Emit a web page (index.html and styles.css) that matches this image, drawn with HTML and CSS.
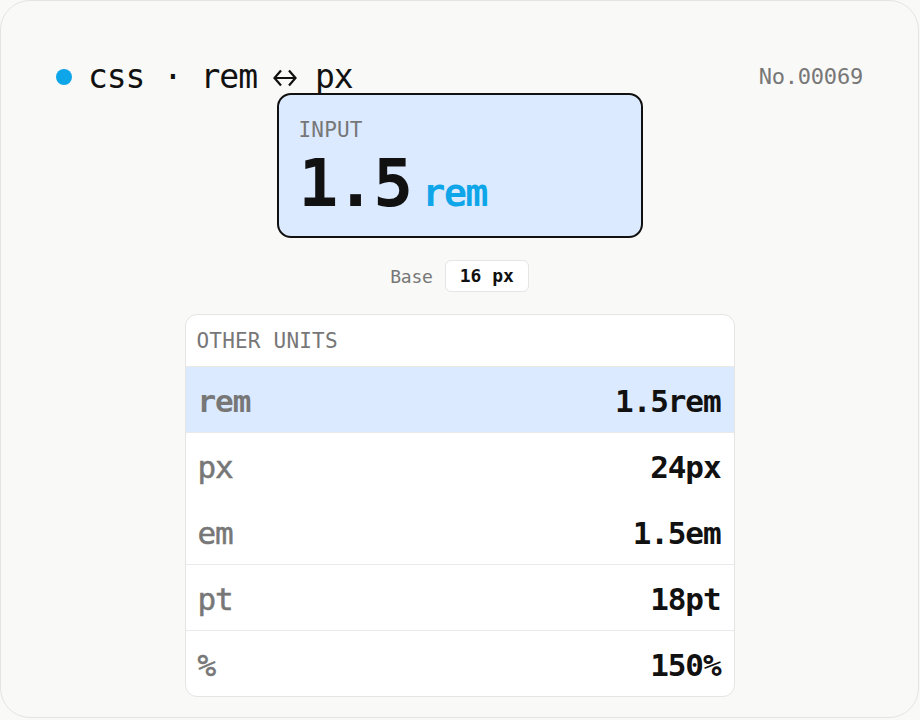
FILE: index.html
```html
<!DOCTYPE html>
<html>
<head lang="en">
<meta charset="UTF-8">
<title>rem ↔ px</title>
<link rel="stylesheet" href="styles.css">
</head>
<body>
<div class="card">
    <div class="top">
        <div class="title">
            <span class="dot"></span>
            <span>css · rem</span>
            <svg class="arrow" width="24" height="18" viewBox="0 0 24 18"><path d="M8 1.5 L1.5 9 L8 16.5 M16 1.5 L22.5 9 L16 16.5 M1.5 9 H22.5" fill="none" stroke="#111" stroke-width="2.2"/></svg>
            <span>px</span>
        </div>
        <div class="no">No.00069</div>
    </div>

    <div class="input">
        <div class="label">INPUT</div>
        <div class="value"><span class="num">1.5</span><span class="unit">rem</span></div>
    </div>

    <div class="base">
        <span class="base-label">Base</span>
        <span class="base-pill">16 px</span>
    </div>

    <div class="units">
        <div class="units-head">OTHER UNITS</div>
        <ul>
            <li class="on"><span>rem</span><b>1.5rem</b></li>
            <li><span>px</span><b>24px</b></li>
            <li class="flat"><span>em</span><b>1.5em</b></li>
            <li><span>pt</span><b>18pt</b></li>
            <li><span>%</span><b>150%</b></li>
        </ul>
    </div>
</div>
</body>
</html>
```

FILE: styles.css
```css
*{margin:0;padding:0;box-sizing:border-box;}
html,body{
	width:100%;
	height:100%;
	background:#f9f9f7;
}
body{
	font-family:"DejaVu Sans Mono","Liberation Mono",monospace;
	color:#111;
}
.card{
	width:919px;
	height:718px;
	border:1px solid #e4e4e4;
	border-radius:30px;
	background:#f9f9f7;
	padding:60px 55px 0 55px;
}

/* header line */
.top{
	display:flex;
	justify-content:space-between;
	align-items:center;
	height:31px;
	margin-bottom:1px;
}
.title{
	display:flex;
	align-items:center;
	font-size:33px;
	line-height:31px;
	letter-spacing:-1.1px;
	white-space:nowrap;
}
.dot{
	width:16px;
	height:16px;
	border-radius:50%;
	background:#0ea5e9;
	margin-right:16px;
}
.arrow{
	margin:2px 18px 0 16px;
}
.no{
	font-size:22px;
	line-height:31px;
	letter-spacing:-0.2px;
	color:#777;
}

/* input box */
.input{
	width:366px;
	margin:0 auto;
	border:2px solid #111;
	border-radius:14px;
	background:#dbeafe;
	padding:23px 20px 19px 20px;
}
.label,.units-head{
	font-size:21px;
	line-height:24px;
	letter-spacing:0.2px;
	color:#777;
}
.value{
	display:flex;
	align-items:baseline;
	margin-top:9px;
	height:66px;
}
.num{
	font-size:66px;
	line-height:66px;
	letter-spacing:-2.4px;
	font-weight:bold;
}
.unit{
	font-size:38px;
	letter-spacing:-1.4px;
	font-weight:bold;
	color:#0ea5e9;
	margin-left:12px;
}

/* base size */
.base{
	display:flex;
	justify-content:center;
	align-items:center;
	gap:12px;
	margin-top:22px;
	font-size:18px;
}
.base-label{
	color:#777;
	letter-spacing:-0.2px;
}
.base-pill{
	height:32px;
	line-height:30px;
	padding:0 14px;
	background:#fff;
	border:1px solid #e5e5e5;
	border-radius:6px;
	font-weight:bold;
}

/* conversion table */
.units{
	width:550px;
	margin:22px auto 0;
	background:#fff;
	border:1px solid #e7e5e4;
	border-radius:12px;
	overflow:hidden;
}
.units-head{
	display:flex;
	align-items:center;
	height:52px;
	padding-left:11px;
	border-bottom:1px solid #ebe8e2;
}
ul{list-style:none;}
li{
	display:flex;
	justify-content:space-between;
	align-items:center;
	height:66px;
	padding:2px 13px 0 12px;
	border-top:1px solid #e9e9e9;
	font-size:31px;
	line-height:34px;
	letter-spacing:-1.1px;
}
li:first-child{border-top:0;height:65px;}
li.flat{border-top-color:transparent;}
li.on{background:#dbeafe;}
li span{
	color:#777;
	-webkit-text-stroke:0.5px #777;
}
li.on span{font-weight:bold;-webkit-text-stroke:0;}
li b{color:#111;}
```
